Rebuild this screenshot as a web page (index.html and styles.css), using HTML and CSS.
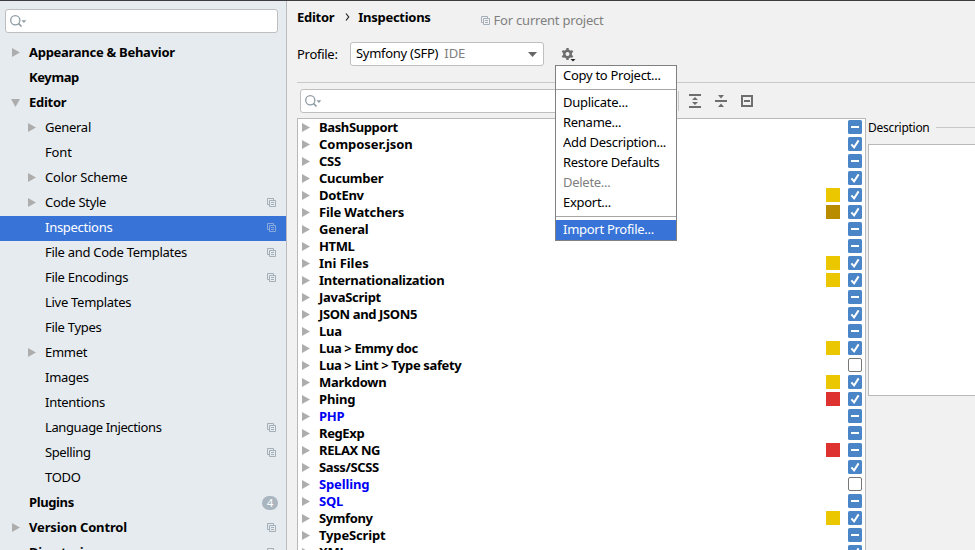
FILE: index.html
```
<!DOCTYPE html>
<html lang="en">
<head>
<meta charset="utf-8">
<title>Settings</title>
<link rel="stylesheet" href="styles.css">
</head>
<body>
<svg class="defs" width="0" height="0" aria-hidden="true">
  <symbol id="right" viewBox="0 0 8 9"><path d="M0 0L8 4.5L0 9Z" fill="#adadad"/></symbol>
  <symbol id="down" viewBox="0 0 9 8"><path d="M0 0H9L4.5 8Z" fill="#adadad"/></symbol>
  <symbol id="copy" viewBox="0 0 9 9"><path d="M2 6.5H.5V.5H6.5V2M2.500 2.500H8.500V8.500H2.500ZM4 4.500H7M4 6.500H7" fill="none" stroke="currentColor"/></symbol>
  <symbol id="search" viewBox="0 0 17 13"><circle cx="5.300" cy="5.300" r="4.600" fill="none" stroke="#8f9ba3" stroke-width="1.300"/><path d="M8.500 8.500L11.500 11.500" stroke="#8f9ba3" stroke-width="1.700"/><path d="M11.500 5.200H16.300L13.900 8Z" fill="#8f9ba3"/></symbol>
  <symbol id="check" viewBox="0 0 14 14"><rect width="14" height="14" rx="1.500" fill="#4a86c7"/><path d="M3.400 7.300L6.100 10.300L10.600 3.400" fill="none" stroke="#fff" stroke-width="2"/></symbol>
  <symbol id="minus" viewBox="0 0 14 14"><rect width="14" height="14" rx="1.500" fill="#4a86c7"/><rect x="3" y="6" width="8" height="2" fill="#fff"/></symbol>
  <symbol id="empty" viewBox="0 0 14 14"><rect x=".5" y=".5" width="13" height="13" rx="1.500" fill="#fff" stroke="#777"/></symbol>
</svg>
<div class="window">
  <aside class="sidebar">
    <div class="search"><svg width="17" height="13"><use href="#search"/></svg></div>
    <nav class="tree">
      <div class="node top"><svg class="arrow" width="8" height="9"><use href="#right"/></svg><span>Appearance &amp; Behavior</span></div>
      <div class="node top tight"><span>Keymap</span></div>
      <div class="node top"><svg class="arrow open" width="9" height="8"><use href="#down"/></svg><span>Editor</span></div>
      <div class="node"><svg class="arrow" width="8" height="9"><use href="#right"/></svg><span>General</span></div>
      <div class="node loose"><span>Font</span></div>
      <div class="node loose"><svg class="arrow" width="8" height="9"><use href="#right"/></svg><span>Color Scheme</span></div>
      <div class="node"><svg class="arrow" width="8" height="9"><use href="#right"/></svg><span>Code Style</span><svg class="copy" width="9" height="9"><use href="#copy"/></svg></div>
      <div class="node selected"><span>Inspections</span><svg class="copy" width="9" height="9"><use href="#copy"/></svg></div>
      <div class="node"><span>File and Code Templates</span><svg class="copy" width="9" height="9"><use href="#copy"/></svg></div>
      <div class="node"><span>File Encodings</span><svg class="copy" width="9" height="9"><use href="#copy"/></svg></div>
      <div class="node"><span>Live Templates</span></div>
      <div class="node"><span>File Types</span></div>
      <div class="node"><svg class="arrow" width="8" height="9"><use href="#right"/></svg><span>Emmet</span></div>
      <div class="node"><span>Images</span></div>
      <div class="node"><span>Intentions</span></div>
      <div class="node tight"><span>Language Injections</span><svg class="copy" width="9" height="9"><use href="#copy"/></svg></div>
      <div class="node tight"><span>Spelling</span><svg class="copy" width="9" height="9"><use href="#copy"/></svg></div>
      <div class="node"><span>TODO</span></div>
      <div class="node top tight"><span>Plugins</span><b class="count">4</b></div>
      <div class="node top loose"><svg class="arrow" width="8" height="9"><use href="#right"/></svg><span>Version Control</span><svg class="copy" width="9" height="9"><use href="#copy"/></svg></div>
      <div class="node top"><span>Directories</span><svg class="copy" width="9" height="9"><use href="#copy"/></svg></div>
    </nav>
  </aside>
  <main class="content">
    <header class="crumbs">
      <span>Editor</span><svg class="chevron" width="5" height="8" viewBox="0 0 5 8"><path d="M1 .5L3.700 4L1 7.500" fill="none" stroke="#222" stroke-width="1.200"/></svg><span>Inspections</span>
      <span class="scope"><svg width="9" height="9"><use href="#copy"/></svg>For current project</span>
    </header>
    <div class="profile">
      <span class="label">Profile:</span>
      <div class="combo"><span>Symfony (SFP)</span><span class="ide">IDE</span><svg width="9" height="5" viewBox="0 0 9 5"><path d="M0 0H9L4.500 5Z" fill="#666"/></svg></div>
      <div class="gear">
        <svg width="16" height="16" viewBox="0 0 16 16"><g fill="#6e6e6e"><path d="M5.300 1H7.700V13H5.300Z"/><path d="M5.300 1H7.700V13H5.300Z" transform="rotate(60 6.500 7)"/><path d="M5.300 1H7.700V13H5.300Z" transform="rotate(120 6.500 7)"/><circle cx="6.500" cy="7" r="4.500"/></g><circle cx="6.500" cy="7" r="2" fill="#f1f1f1"/><path d="M9.500 12H14.500L12 14.500Z" fill="#222"/></svg>
        <div class="menu">
          <div class="item">Copy to Project...</div>
          <hr>
          <div class="item">Duplicate...</div>
          <div class="item">Rename...</div>
          <div class="item">Add Description...</div>
          <div class="item">Restore Defaults</div>
          <div class="item disabled">Delete...</div>
          <div class="item">Export...</div>
          <hr>
          <div class="item active">Import Profile...</div>
        </div>
      </div>
    </div>
    <div class="toolbar">
      <div class="search"><svg width="17" height="13"><use href="#search"/></svg></div>
      <i class="divider"></i>
      <svg width="12" height="14" viewBox="0 0 12 14"><path d="M0 0H12V2H0ZM0 12H12V14H0ZM6 3L9 6H3ZM3 8H9L6 11Z" fill="#6e6e6e"/></svg>
      <svg width="12" height="12" viewBox="0 0 12 12"><path d="M0 5H12V7H0ZM3 0H9L6 3.500ZM6 8.500L9 12H3Z" fill="#6e6e6e"/></svg>
      <svg width="12" height="12" viewBox="0 0 12 12"><path d="M1 1H11V11H1ZM3 6H9" fill="none" stroke="#6e6e6e" stroke-width="2"/></svg>
    </div>
    <div class="panes">
      <div class="list">
        <div class="row tight"><svg class="arrow" width="8" height="9"><use href="#right"/></svg><span>BashSupport</span><svg class="box" width="14" height="14"><use href="#minus"/></svg></div>
        <div class="row natural"><svg class="arrow" width="8" height="9"><use href="#right"/></svg><span>Composer.json</span><svg class="box" width="14" height="14"><use href="#check"/></svg></div>
        <div class="row"><svg class="arrow" width="8" height="9"><use href="#right"/></svg><span>CSS</span><svg class="box" width="14" height="14"><use href="#minus"/></svg></div>
        <div class="row"><svg class="arrow" width="8" height="9"><use href="#right"/></svg><span>Cucumber</span><svg class="box" width="14" height="14"><use href="#check"/></svg></div>
        <div class="row"><svg class="arrow" width="8" height="9"><use href="#right"/></svg><span>DotEnv</span><i class="level"></i><svg class="box" width="14" height="14"><use href="#check"/></svg></div>
        <div class="row loose"><svg class="arrow" width="8" height="9"><use href="#right"/></svg><span>File Watchers</span><i class="level weak"></i><svg class="box" width="14" height="14"><use href="#check"/></svg></div>
        <div class="row loose"><svg class="arrow" width="8" height="9"><use href="#right"/></svg><span>General</span><svg class="box" width="14" height="14"><use href="#minus"/></svg></div>
        <div class="row tight"><svg class="arrow" width="8" height="9"><use href="#right"/></svg><span>HTML</span><svg class="box" width="14" height="14"><use href="#minus"/></svg></div>
        <div class="row natural"><svg class="arrow" width="8" height="9"><use href="#right"/></svg><span>Ini Files</span><i class="level"></i><svg class="box" width="14" height="14"><use href="#check"/></svg></div>
        <div class="row"><svg class="arrow" width="8" height="9"><use href="#right"/></svg><span>Internationalization</span><i class="level"></i><svg class="box" width="14" height="14"><use href="#check"/></svg></div>
        <div class="row"><svg class="arrow" width="8" height="9"><use href="#right"/></svg><span>JavaScript</span><svg class="box" width="14" height="14"><use href="#minus"/></svg></div>
        <div class="row tight"><svg class="arrow" width="8" height="9"><use href="#right"/></svg><span>JSON and JSON5</span><svg class="box" width="14" height="14"><use href="#check"/></svg></div>
        <div class="row"><svg class="arrow" width="8" height="9"><use href="#right"/></svg><span>Lua</span><svg class="box" width="14" height="14"><use href="#minus"/></svg></div>
        <div class="row tight"><svg class="arrow" width="8" height="9"><use href="#right"/></svg><span>Lua &gt; Emmy doc</span><i class="level"></i><svg class="box" width="14" height="14"><use href="#check"/></svg></div>
        <div class="row tight"><svg class="arrow" width="8" height="9"><use href="#right"/></svg><span>Lua &gt; Lint &gt; Type safety</span><svg class="box" width="14" height="14"><use href="#empty"/></svg></div>
        <div class="row"><svg class="arrow" width="8" height="9"><use href="#right"/></svg><span>Markdown</span><i class="level"></i><svg class="box" width="14" height="14"><use href="#check"/></svg></div>
        <div class="row loose"><svg class="arrow" width="8" height="9"><use href="#right"/></svg><span>Phing</span><i class="level error"></i><svg class="box" width="14" height="14"><use href="#check"/></svg></div>
        <div class="row changed"><svg class="arrow" width="8" height="9"><use href="#right"/></svg><span>PHP</span><svg class="box" width="14" height="14"><use href="#minus"/></svg></div>
        <div class="row tight"><svg class="arrow" width="8" height="9"><use href="#right"/></svg><span>RegExp</span><svg class="box" width="14" height="14"><use href="#minus"/></svg></div>
        <div class="row tight"><svg class="arrow" width="8" height="9"><use href="#right"/></svg><span>RELAX NG</span><i class="level error"></i><svg class="box" width="14" height="14"><use href="#minus"/></svg></div>
        <div class="row tight"><svg class="arrow" width="8" height="9"><use href="#right"/></svg><span>Sass/SCSS</span><svg class="box" width="14" height="14"><use href="#check"/></svg></div>
        <div class="row changed loose"><svg class="arrow" width="8" height="9"><use href="#right"/></svg><span>Spelling</span><svg class="box" width="14" height="14"><use href="#empty"/></svg></div>
        <div class="row changed"><svg class="arrow" width="8" height="9"><use href="#right"/></svg><span>SQL</span><svg class="box" width="14" height="14"><use href="#minus"/></svg></div>
        <div class="row tight"><svg class="arrow" width="8" height="9"><use href="#right"/></svg><span>Symfony</span><i class="level"></i><svg class="box" width="14" height="14"><use href="#check"/></svg></div>
        <div class="row loose"><svg class="arrow" width="8" height="9"><use href="#right"/></svg><span>TypeScript</span><svg class="box" width="14" height="14"><use href="#minus"/></svg></div>
        <div class="row"><svg class="arrow" width="8" height="9"><use href="#right"/></svg><span>XML</span><svg class="box" width="14" height="14"><use href="#check"/></svg></div>
      </div>
      <section class="description">
        <h2>Description</h2>
        <div class="text"></div>
      </section>
    </div>
  </main>
</div>
</body>
</html>
```
FILE: styles.css
```
* { box-sizing: border-box; }
body {
  margin: 0;
  font: 13px/17px "Noto Sans", sans-serif;
  letter-spacing: -0.28px;
  color: #000;
  background: #f1f1f1;
  overflow: hidden;
}
svg { display: block; flex: none; }
.defs { position: absolute; }
.tight { letter-spacing: -0.38px; }
.loose { letter-spacing: -0.15px; }
.natural { letter-spacing: -0.03px; }
.window {
  display: flex;
  height: 550px;
  border-top: 1px solid #3c3c3f;
  overflow: hidden;
}
.sidebar {
  width: 287px;
  flex: none;
  background: #e6ebef;
  border-right: 1px solid #b9bdc0;
  padding-top: 8px;
}
.search {
  height: 24px;
  background: #fff;
  border: 1px solid #bfbfbf;
  border-radius: 3px;
  padding: 5px 0 0 4px;
}
.sidebar .search { margin: 0 8px 0 5px; }
.tree { margin-top: 8px; }
.node {
  display: flex;
  align-items: center;
  height: 25px;
  padding: 0 10px 0 45px;
  white-space: nowrap;
}
.node span { position: relative; top: -1px; }
.top { padding-left: 29px; font-weight: bold; }
.arrow { margin: 0 9px 0 -17px; }
.node .arrow { position: relative; top: -1px; }
.arrow.open { margin: 0 9px 0 -18px; }
.copy { margin: 0 0 2px auto; color: #a4afb8; }
.selected { background: #3874d8; color: #fff; }
.selected .copy { color: #8ba9dc; }
.count {
  margin: 0 -2px 1px auto;
  width: 16px;
  height: 14px;
  border-radius: 7px;
  background: #a9b5bf;
  color: #fff;
  font-size: 11px;
  font-weight: normal;
  line-height: 14px;
  text-align: center;
}
.content { flex: 1; min-width: 0; padding-left: 10px; }
.crumbs {
  display: flex;
  align-items: center;
  height: 32px;
  font-weight: bold;
}
.chevron { margin: 0 8px 0 11px; }
.scope {
  display: flex;
  align-items: center;
  gap: 4px;
  margin: 6px 0 0 50px;
  font-weight: normal;
  letter-spacing: -0.22px;
  color: #808080;
}
.scope svg { color: #a4afb8; }
.profile {
  display: flex;
  align-items: center;
  height: 50px;
  padding-bottom: 8px;
  border-bottom: 1px solid #c9c9c9;
}
.label { width: 53px; padding-top: 2px; }
.combo {
  display: flex;
  align-items: center;
  width: 194px;
  height: 24px;
  padding: 0 6px 0 5px;
  background: #fff;
  border: 1px solid #bfbfbf;
  border-radius: 3px;
}
.ide { margin-left: 6px; color: #808080; letter-spacing: 0; }
.combo svg { margin: 1px 0 0 auto; }
.gear { position: relative; top: 1px; margin-left: 17px; }
.menu {
  position: absolute;
  left: -6px;
  top: 18px;
  width: 122px;
  height: 176px;
  background: #fff;
  border: 1px solid #808080;
  z-index: 2;
}
.item { height: 20px; padding-left: 7px; line-height: 19px; white-space: nowrap; }
.menu hr { margin: 3px 0; border: 0; border-top: 1px solid #a6a6a6; }
.disabled { color: #808080; }
.active { background: #3874d8; color: #fff; }
.toolbar {
  display: flex;
  align-items: center;
  gap: 14px;
  height: 35px;
  padding: 0 0 0 3px;
}
.toolbar .search { width: 365px; margin-top: 1px; }
.divider { width: 1px; height: 20px; margin: 0 -4px 0 -1px; background: #c9c9c9; }
.panes { display: flex; gap: 2px; height: 440px; }
.list {
  width: 569px;
  flex: none;
  padding-right: 3px;
  background: #fff;
  border: 1px solid #b9b9b9;
  overflow: hidden;
}
.row {
  display: flex;
  align-items: center;
  height: 17px;
  padding-left: 21px;
  font-weight: bold;
  white-space: nowrap;
}
.row span { flex: 1; }
.changed { color: #0000f5; }
.box { margin-bottom: 1px; }
.level { width: 14px; height: 14px; margin: 0 8px 1px 0; background: #ebc700; }
.weak { background: #b98c00; }
.error { background: #de3230; }
.description { flex: 1; min-width: 0; }
h2 {
  display: flex;
  align-items: center;
  gap: 6px;
  margin: 0;
  height: 26px;
  padding-bottom: 8px;
  font-size: 12px;
  font-weight: normal;
}
h2::after { content: ""; flex: 1; height: 1px; background: #c9c9c9; }
.text {
  height: 252px;
  background: #fff;
  border: 1px solid #b9b9b9;
  border-right: 0;
}
```
